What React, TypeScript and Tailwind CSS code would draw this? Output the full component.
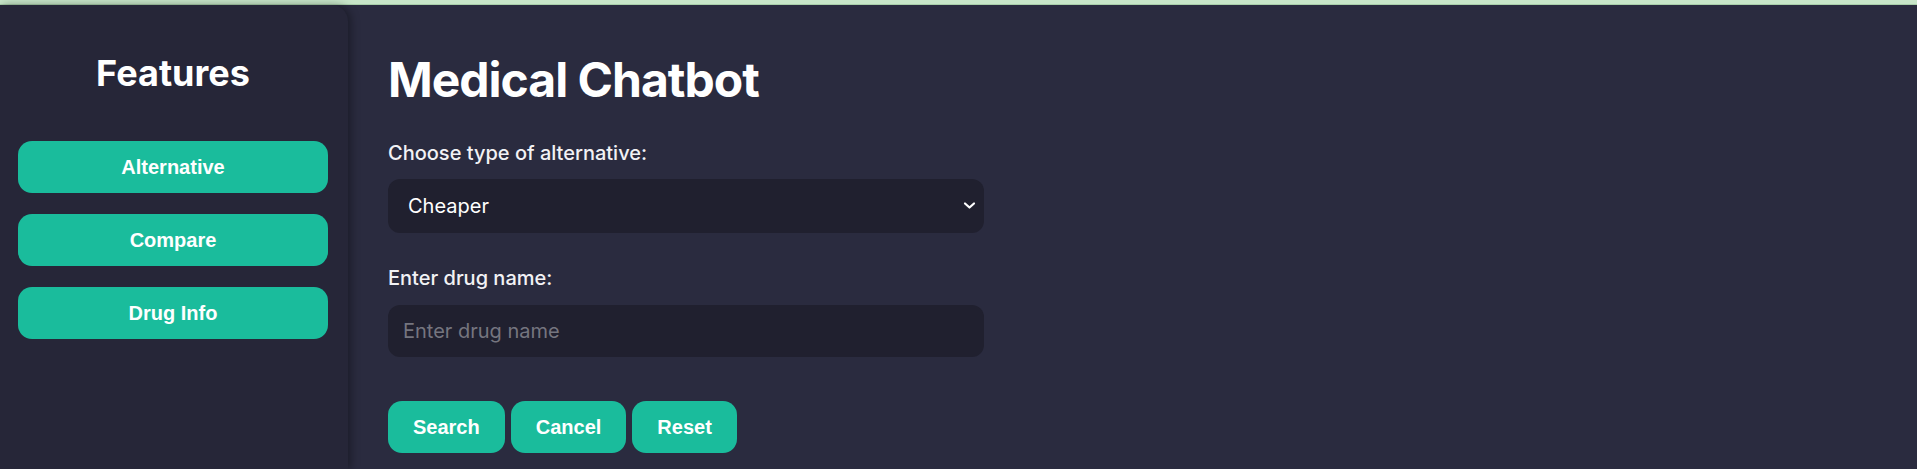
import React from "react";

const inter = "font-['Inter','Noto_Sans',sans-serif]";
const arial = "font-['Liberation_Sans',Arial,sans-serif]";

function SideButton({ label }: { label: string }) {
  return (
    <button
      type="button"
      className={`h-[52px] w-full rounded-[14px] bg-[#1abc9c] text-[20px] font-bold leading-[23px] text-white ${arial}`}
    >
      {label}
    </button>
  );
}

function ActionButton({ label }: { label: string }) {
  return (
    <button
      type="button"
      className={`h-[52px] rounded-[14px] bg-[#1abc9c] px-[25px] text-[20px] font-bold leading-[23px] text-white ${arial}`}
    >
      {label}
    </button>
  );
}

export default function App() {
  return (
    <div className={`flex h-[469px] w-full flex-col overflow-hidden bg-[#1e1e2c] ${inter}`}>
      <div className="h-[5px] w-full shrink-0 border-b border-[#a9cfaa] bg-[#c8e6c9]" />
      <div className="flex flex-1 bg-[#2a2b3f]">
        <aside className="relative z-10 flex w-[348px] shrink-0 flex-col rounded-tr-[16px] bg-[#262638] pl-[18px] pr-[20px] pt-[50px] shadow-[3px_0_8px_rgba(0,0,0,0.35)]">
          <h2 className="text-center text-[36px] font-bold leading-[36px] text-white">Features</h2>
          <div className="mt-[50px] flex flex-col gap-[21px]">
            <SideButton label="Alternative" />
            <SideButton label="Compare" />
            <SideButton label="Drug Info" />
          </div>
        </aside>
        <main className="flex flex-1 flex-col pl-[40px] pt-[51px]">
          <h1 className="text-[48px] font-bold leading-[48px] tracking-[-1px] text-white">Medical Chatbot</h1>
          <label className="mt-[37px] text-[20px] font-medium leading-[24px] text-[#f2f2f5]">
            Choose type of alternative:
          </label>
          <div className="relative mt-[14px] h-[54px] w-[596px]">
            <select
              defaultValue="cheaper"
              className={`h-full w-full appearance-none rounded-[12px] bg-[#20202f] pl-[20px] text-[20px] text-white outline-none ${inter}`}
            >
              <option value="cheaper">Cheaper</option>
              <option value="better">Better</option>
            </select>
            <svg
              className="pointer-events-none absolute right-[8px] top-[22px]"
              width="13"
              height="9"
              viewBox="0 0 13 9"
              fill="none"
            >
              <path d="M2 2.5 L6.5 6.5 L11 2.5" stroke="#ffffff" strokeWidth="2.2" strokeLinecap="round" strokeLinejoin="round" />
            </svg>
          </div>
          <label className="mt-[33px] text-[20px] font-medium leading-[24px] text-[#f2f2f5]">
            Enter drug name:
          </label>
          <input
            type="text"
            placeholder="Enter drug name"
            className={`mt-[15px] h-[52px] w-[596px] rounded-[12px] bg-[#20202f] pl-[15px] text-[20px] text-white outline-none placeholder:text-[#75757f] ${inter}`}
          />
          <div className="mt-[44px] flex gap-[6px]">
            <ActionButton label="Search" />
            <ActionButton label="Cancel" />
            <ActionButton label="Reset" />
          </div>
        </main>
      </div>
    </div>
  );
}
